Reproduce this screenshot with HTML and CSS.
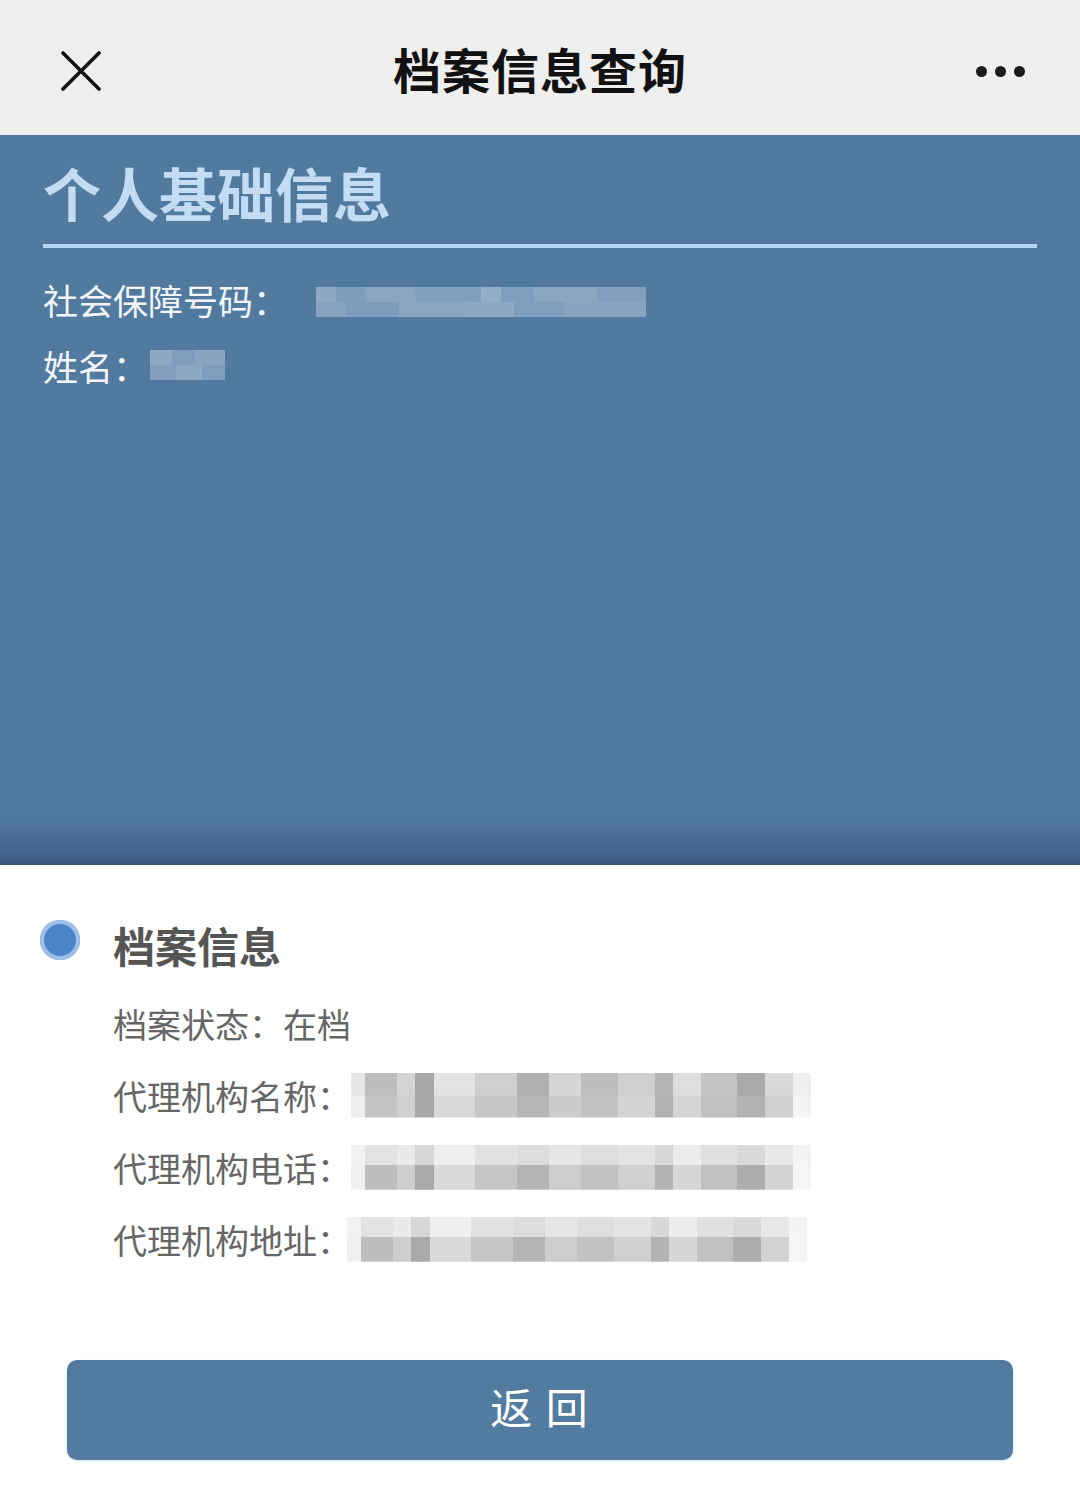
FILE: index.html
```html
<!DOCTYPE html>
<html lang="zh-CN">
<head>
<meta charset="utf-8">
<title>档案信息查询</title>
<link rel="stylesheet" href="styles.css">
</head>
<body>
<div class="page">
  <header class="topbar">
    <svg class="close" viewBox="0 0 40 40" width="40" height="40">
      <path d="M2 2 L38 38 M38 2 L2 38" stroke="#111" stroke-width="3.6" stroke-linecap="round" fill="none"/>
    </svg>
    <h1 class="title">档案信息查询</h1>
    <div class="more"><span></span><span></span><span></span></div>
  </header>

  <section class="panel">
    <h2 class="panel-title">个人基础信息</h2>
    <div class="panel-row">社会保障号码：<span class="blur blur-id"></span></div>
    <div class="panel-row">姓名：<span class="blur blur-name"></span></div>
  </section>

  <section class="archive">
    <div class="archive-head"><span class="dot"></span><h3>档案信息</h3></div>
    <div class="archive-rows">
      <div class="arow">档案状态：在档</div>
      <div class="arow">代理机构名称：<span class="blur gray g1"></span></div>
      <div class="arow">代理机构电话：<span class="blur gray g2"></span></div>
      <div class="arow">代理机构地址：<span class="blur gray g3"></span></div>
    </div>
    <div class="btn-wrap"><button class="back">返&nbsp;回</button></div>
  </section>
</div>
</body>
</html>
```

FILE: styles.css
```css
* { box-sizing: border-box; }
html, body { margin: 0; padding: 0; }
body {
  width: 1080px;
  height: 1510px;
  background: #ffffff;
  font-family: "Noto Sans CJK SC", "Noto Sans", sans-serif;
  overflow: hidden;
}
.page { display: flex; flex-direction: column; height: 1510px; }

.topbar {
  height: 135px;
  background: #efefef;
  display: flex;
  align-items: center;
  justify-content: space-between;
  padding: 0 55px 0 61px;
  position: relative;
}
.close { display: block; margin-top: 6px; }
.title {
  position: absolute;
  left: 0; right: 0;
  top: 0;
  margin: 0;
  text-align: center;
  line-height: 136px;
  font-size: 48px;
  font-weight: 700;
  color: #111;
  letter-spacing: 1px;
  padding-left: 0;
  pointer-events: none;
}
.more { display: flex; gap: 8px; margin-top: 8px; }
.more span { width: 11px; height: 11px; border-radius: 50%; background: #1a1a1a; }

.panel {
  height: 730px;
  background: linear-gradient(to bottom, #527a9f 0%, #527a9f 92%, #4c7299 95%, #3f6188 99%, #35547a 100%);
  padding: 22px 43px 0 43px;
  color: #f2f5f9;
}
.panel-title {
  margin: 0 0 19px 0;
  font-size: 58px;
  line-height: 70px;
  font-weight: 700;
  color: #c3dcf3;
  padding-bottom: 17px;
  border-bottom: 4px solid #b5d8f4;
}
.panel-row {
  display: flex;
  align-items: center;
  font-size: 35px;
  line-height: 66px;
  height: 66px;
  color: #f2f6fa;
}
.blur { display: inline-block; }
.blur-id {
  width: 330px; height: 30px; margin-left: 28px; margin-top: 4px;
  background:
    linear-gradient(90deg, #8fa9c5 0 6%, #7e9cbb 6% 15%, #8aa5c2 15% 30%, #819fbe 30% 50%, #94adc8 50% 56%, #7f9dbc 56% 66%, #8ba6c3 66% 85%, #829fbe 85% 100%) top/100% 50% no-repeat,
    linear-gradient(90deg, #86a2c0 0 9%, #7d9bbb 9% 25%, #8aa5c2 25% 45%, #8fa9c5 45% 60%, #7f9dbc 60% 75%, #88a4c2 75% 100%) bottom/100% 50% no-repeat;
}
.blur-name {
  width: 75px; height: 30px; margin-left: 2px; margin-top: -2px;
  background:
    linear-gradient(90deg, #8fa9c5 0 30%, #7f9dbc 30% 60%, #89a4c1 60% 100%) top/100% 50% no-repeat,
    linear-gradient(90deg, #849fbe 0 35%, #8ea8c4 35% 70%, #7f9dbc 70% 100%) bottom/100% 50% no-repeat;
}

.archive { flex: 1; padding: 50px 0 0 40px; }
.archive-head { display: flex; align-items: center; height: 60px; }
.dot {
  width: 40px; height: 40px; border-radius: 50%;
  background: #4a84c6;
  box-shadow: inset 0 0 0 4px #9fc0e6;
  margin-top: -10px;
}
.archive-head h3 {
  margin: 0 0 0 33px;
  font-size: 42px;
  line-height: 60px;
  font-weight: 700;
  color: #555555;
}
.archive-rows { padding-left: 73px; margin-top: 12px; }
.arow {
  display: flex;
  align-items: center;
  height: 72px;
  font-size: 34px;
  color: #666666;
}
.gray { width: 460px; height: 45px; }
.g1 {
  margin-left: 0px;
  background:
    linear-gradient(90deg, #e6e6e6 0 3%, #bdbdbd 3% 10%, #d4d4d4 10% 14%, #a7a7a7 14% 18%, #e3e3e3 18% 27%, #cfcfcf 27% 36%, #b0b0b0 36% 43%, #d6d6d6 43% 50%, #bdbdbd 50% 58%, #cfcfcf 58% 66%, #b4b4b4 66% 70%, #dedede 70% 76%, #c4c4c4 76% 84%, #aaaaaa 84% 90%, #d9d9d9 90% 96%, #efefef 96% 100%) top/100% 50% no-repeat,
    linear-gradient(90deg, #eeeeee 0 3%, #c4c4c4 3% 10%, #d0d0d0 10% 14%, #a8a8a8 14% 18%, #d9d9d9 18% 27%, #c7c7c7 27% 36%, #b7b7b7 36% 43%, #cccccc 43% 50%, #c2c2c2 50% 58%, #d3d3d3 58% 66%, #b1b1b1 66% 70%, #d5d5d5 70% 76%, #c0c0c0 76% 84%, #b2b2b2 84% 90%, #cfcfcf 90% 96%, #f4f4f4 96% 100%) bottom/100% 50% no-repeat;
}
.g2, .g3 {
  background:
    linear-gradient(90deg, #f2f2f2 0 3%, #e3e3e3 3% 10%, #eaeaea 10% 14%, #d7d7d7 14% 18%, #efefef 18% 27%, #e2e2e2 27% 36%, #dcdcdc 36% 43%, #e6e6e6 43% 50%, #dedede 50% 58%, #e4e4e4 58% 66%, #d8d8d8 66% 70%, #ececec 70% 76%, #e0e0e0 76% 84%, #d9d9d9 84% 90%, #e8e8e8 90% 96%, #f4f4f4 96% 100%) top/100% 45% no-repeat,
    linear-gradient(90deg, #f0f0f0 0 3%, #bdbdbd 3% 10%, #cecece 10% 14%, #aaaaaa 14% 18%, #dadada 18% 27%, #c6c6c6 27% 36%, #b5b5b5 36% 43%, #cdcdcd 43% 50%, #c2c2c2 50% 58%, #d0d0d0 58% 66%, #b3b3b3 66% 70%, #d6d6d6 70% 76%, #c1c1c1 76% 84%, #aeaeae 84% 90%, #d3d3d3 90% 96%, #f5f5f5 96% 100%) bottom/100% 55% no-repeat;
}
.g2 { margin-left: 0px; }
.g3 { margin-left: -4px; }

.btn-wrap { padding: 85px 27px 0 27px; }
.back {
  display: block;
  width: 946px;
  height: 100px;
  border: 0;
  border-radius: 10px;
  background: #537a9f;
  color: #ffffff;
  font-family: "Noto Sans CJK SC", "Noto Sans", sans-serif;
  font-size: 42px;
  line-height: 92px;
  letter-spacing: 2px;
  padding: 0 0 8px 0;
  box-shadow: 0 1px 3px rgba(120, 170, 220, 0.35);
}
```
